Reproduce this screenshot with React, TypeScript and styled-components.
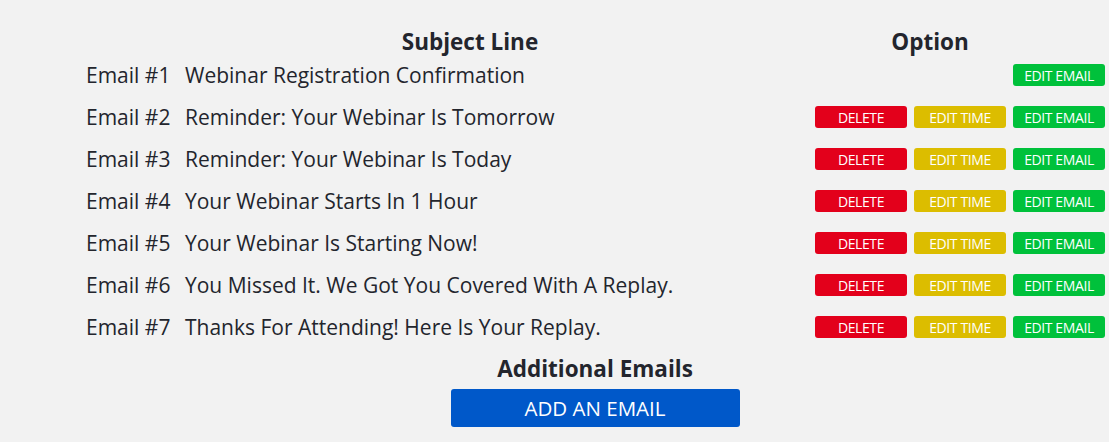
import React from "react"
import styled, { createGlobalStyle } from "styled-components"

const GlobalStyle = createGlobalStyle`
  html, body {
    margin: 0;
    padding: 0;
    background: #f2f2f2;
    font-family: "Open Sans", "Liberation Sans", sans-serif;
    color: #23252d;
  }
`

const Page = styled.div`
  width: 1109px;
  height: 442px;
  overflow: hidden;
  padding-top: 30px;
  box-sizing: border-box;
`

const EmailTable = styled.div`
  display: grid;
  grid-template-columns: 99px 570px 350px;
  grid-template-rows: 24px;
  grid-auto-rows: 42px;
  margin-left: 86px;
`

const HeaderCell = styled.div`
  font-size: 22.5px;
  font-weight: 700;
  text-align: center;
  line-height: 24px;
`

const Cell = styled.div`
  display: flex;
  align-items: center;
  font-size: 21px;
  white-space: nowrap;
`

const OptionCell = styled.div`
  display: flex;
  align-items: center;
  justify-content: flex-end;
  gap: 7px;
`

const colors = {
  delete: "#e3001b",
  time: "#dcbd00",
  email: "#00c13b",
}

const SmallBtn = styled.button<{ $kind: keyof typeof colors }>`
  width: 92px;
  height: 22px;
  border: 0;
  border-radius: 3px;
  padding: 0;
  background: ${(p) => colors[p.$kind]};
  color: #fff;
  font-family: "Open Sans", "Liberation Sans", sans-serif;
  font-size: 14px;
  letter-spacing: -0.4px;
  cursor: pointer;
`

const Footer = styled.div`
  display: flex;
  flex-direction: column;
  align-items: center;
  padding-left: 81px;
  margin-top: 7px;
`

const FooterTitle = styled.div`
  font-size: 22.5px;
  font-weight: 700;
  line-height: 28px;
`

const AddBtn = styled.button`
  margin-top: 6px;
  width: 289px;
  height: 38px;
  border: 0;
  border-radius: 3px;
  background: #0058c9;
  color: #fff;
  font-family: "Open Sans", "Liberation Sans", sans-serif;
  font-size: 20.5px;
  cursor: pointer;
`

const subjects = [
  "Webinar Registration Confirmation",
  "Reminder: Your Webinar Is Tomorrow",
  "Reminder: Your Webinar Is Today",
  "Your Webinar Starts In 1 Hour",
  "Your Webinar Is Starting Now!",
  "You Missed It. We Got You Covered With A Replay.",
  "Thanks For Attending! Here Is Your Replay.",
]

export default function App() {
  return (
    <Page>
      <GlobalStyle />
      <EmailTable>
        <HeaderCell />
        <HeaderCell>Subject Line</HeaderCell>
        <HeaderCell>Option</HeaderCell>
        {subjects.map((s, i) => (
          <React.Fragment key={i}>
            <Cell>Email #{i + 1}</Cell>
            <Cell>{s}</Cell>
            <OptionCell>
              {i > 0 && <SmallBtn $kind="delete">DELETE</SmallBtn>}
              {i > 0 && <SmallBtn $kind="time">EDIT TIME</SmallBtn>}
              <SmallBtn $kind="email">EDIT EMAIL</SmallBtn>
            </OptionCell>
          </React.Fragment>
        ))}
      </EmailTable>
      <Footer>
        <FooterTitle>Additional Emails</FooterTitle>
        <AddBtn>ADD AN EMAIL</AddBtn>
      </Footer>
    </Page>
  )
}
